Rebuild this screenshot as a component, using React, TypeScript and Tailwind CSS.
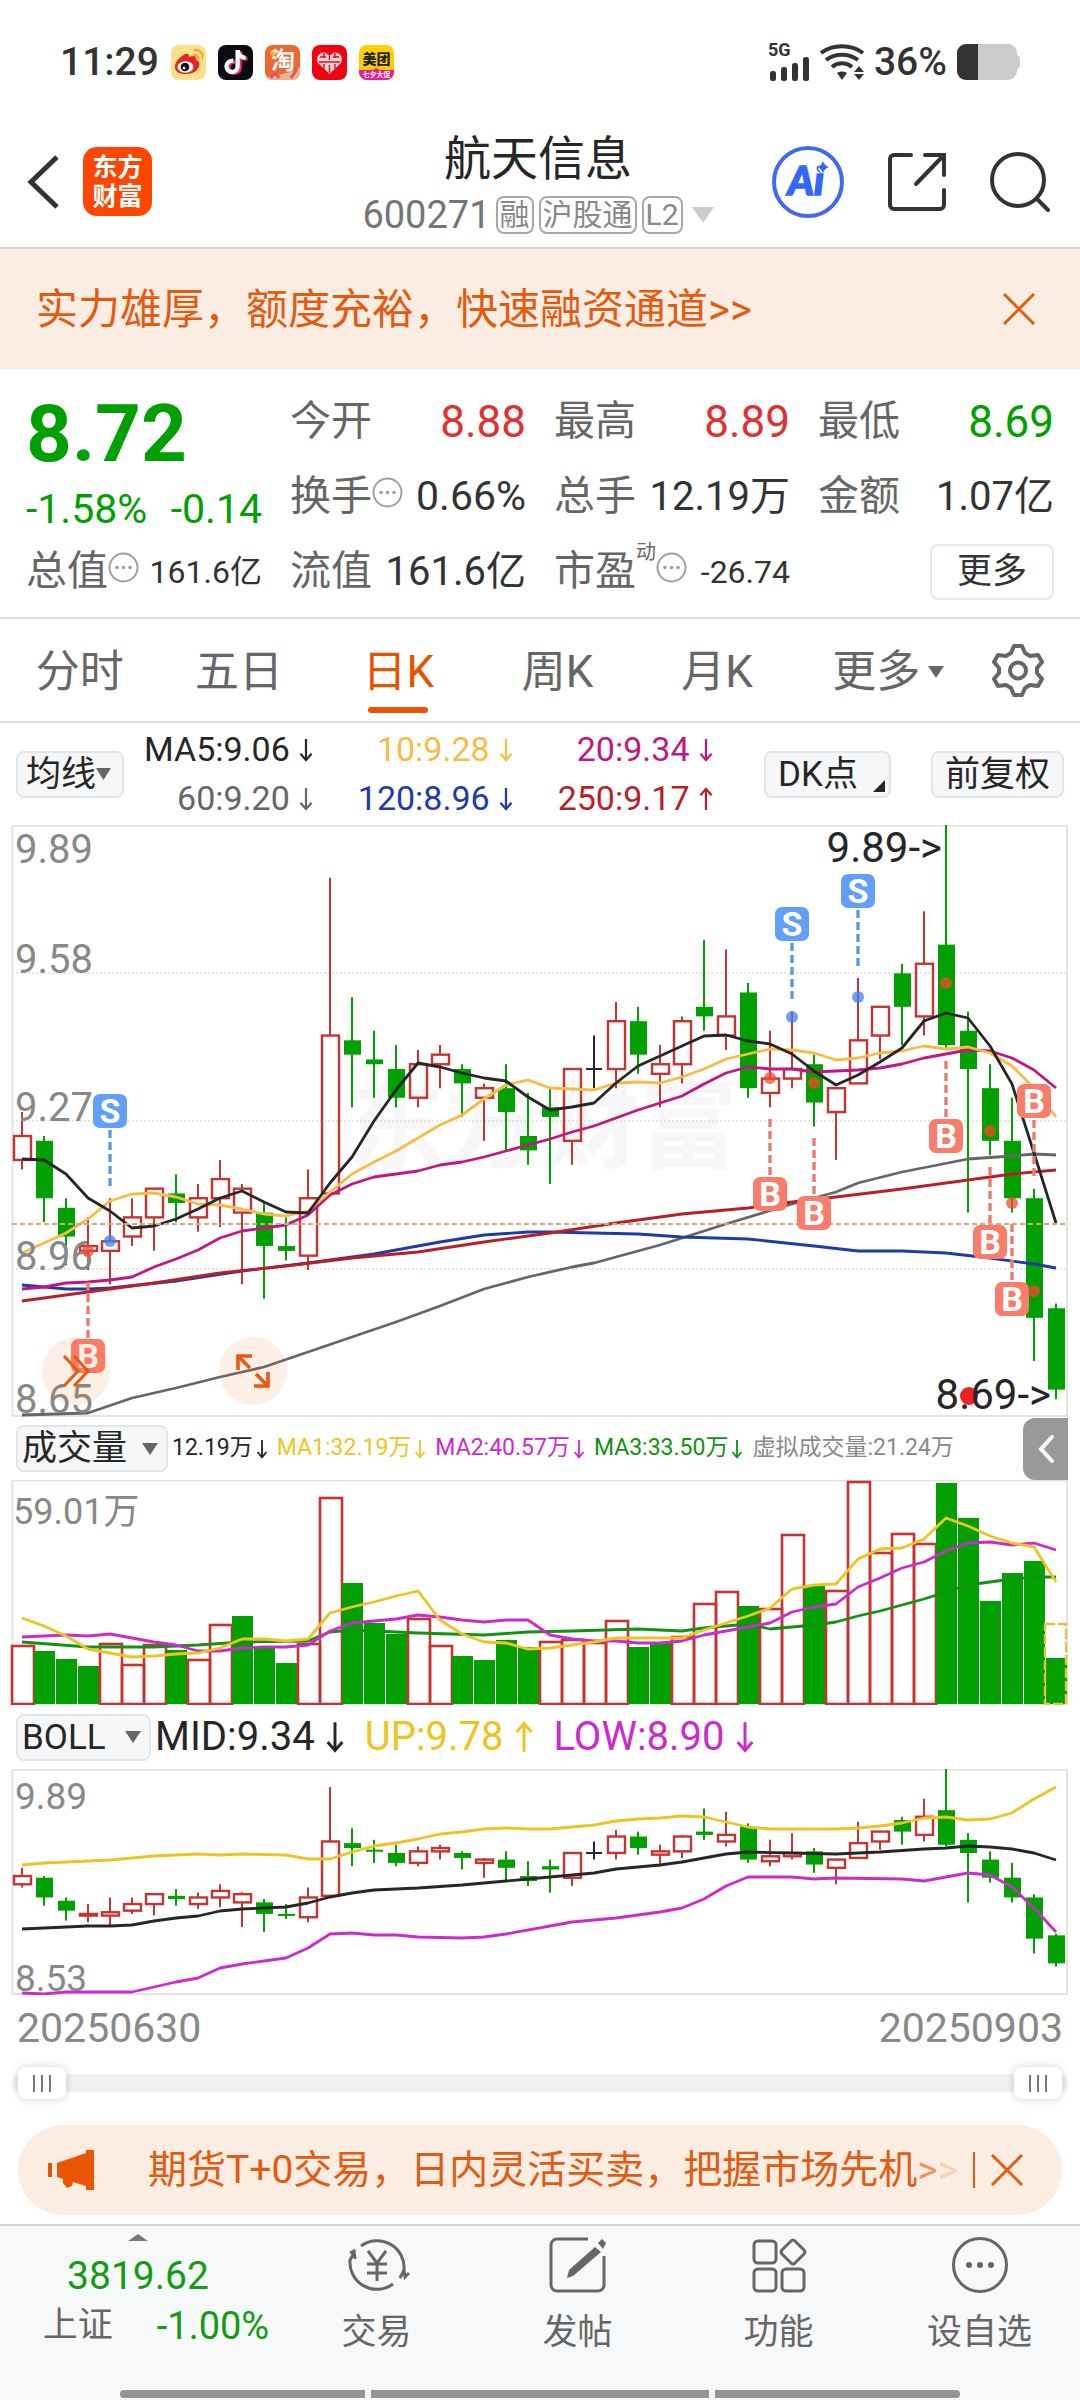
import React, { useState } from 'react';
import { FaTiktok } from 'react-icons/fa6';

type Point = [number, number];

interface Candle {
  open: number;
  close: number;
  high: number;
  low: number;
}

const GREEN = '#00a000';
const RED = '#c63432';

const X0 = 22;
const STEP = 22;
const TOP_PRICE = 9.89;

const xOf = (index: number) => X0 + index * STEP;

const toPoints = (points: Point[]) => points.map(([i, y]) => `${xOf(i)},${y}`).join(' ');

// open, close, high, low
const CANDLES: Candle[] = [
  [9.19, 9.24, 9.29, 9.17],
  [9.23, 9.11, 9.24, 9.06],
  [9.09, 9.03, 9.11, 8.97],
  [9.0, 9.01, 9.07, 8.96],
  [9.0, 9.02, 9.11, 8.93],
  [9.03, 9.07, 9.11, 9.01],
  [9.07, 9.13, 9.13, 9.0],
  [9.12, 9.1, 9.16, 9.06],
  [9.07, 9.11, 9.14, 9.04],
  [9.11, 9.15, 9.19, 9.05],
  [9.08, 9.13, 9.14, 8.93],
  [9.08, 9.01, 9.1, 8.9],
  [9.01, 9.0, 9.07, 8.98],
  [8.99, 9.11, 9.17, 8.96],
  [9.12, 9.45, 9.78, 9.12],
  [9.44, 9.41, 9.53, 9.3],
  [9.4, 9.39, 9.46, 9.32],
  [9.38, 9.32, 9.43, 9.3],
  [9.32, 9.39, 9.42, 9.3],
  [9.39, 9.41, 9.43, 9.34],
  [9.38, 9.35, 9.39, 9.28],
  [9.32, 9.34, 9.35, 9.23],
  [9.34, 9.29, 9.39, 9.21],
  [9.24, 9.21, 9.33, 9.18],
  [9.3, 9.28, 9.34, 9.14],
  [9.23, 9.38, 9.38, 9.18],
  [9.38, 9.38, 9.45, 9.34],
  [9.38, 9.48, 9.52, 9.34],
  [9.48, 9.41, 9.51, 9.37],
  [9.37, 9.39, 9.43, 9.3],
  [9.39, 9.48, 9.49, 9.35],
  [9.51, 9.49, 9.65, 9.46],
  [9.45, 9.49, 9.63, 9.42],
  [9.54, 9.34, 9.56, 9.32],
  [9.33, 9.36, 9.46, 9.3],
  [9.36, 9.38, 9.5, 9.34],
  [9.39, 9.31, 9.41, 9.26],
  [9.29, 9.34, 9.34, 9.19],
  [9.35, 9.44, 9.57, 9.35],
  [9.45, 9.51, 9.51, 9.4],
  [9.58, 9.51, 9.6, 9.43],
  [9.49, 9.6, 9.71, 9.45],
  [9.64, 9.43, 9.89, 9.42],
  [9.46, 9.38, 9.5, 9.08],
  [9.34, 9.23, 9.39, 9.2],
  [9.23, 9.11, 9.32, 9.08],
  [9.11, 8.86, 9.13, 8.77],
  [8.88, 8.71, 8.89, 8.69],
].map(([open, close, high, low]) => ({ open, close, high, low }));

const MA_LINES: { color: string; points: Point[] }[] = [
  {
    color: '#666666',
    points: [[0, 590], [3, 588], [5, 573], [7, 563], [9, 552], [11, 542], [13, 527], [15, 512], [17, 497], [19, 481], [21, 464], [22, 458], [23, 452], [25, 442], [26, 438], [29, 420], [32, 399], [35, 379], [37, 367], [38, 358], [40, 347], [43, 334], [45, 331], [46, 329], [47, 330]],
  },
  {
    color: '#1f3ba8',
    points: [[0, 460], [2, 464], [3, 464], [4, 463], [7, 456], [10, 446], [13, 438], [16, 429], [19, 417], [21, 410], [23, 407], [24, 407], [28, 409], [30, 412], [33, 414], [36, 421], [38, 426], [40, 426], [42, 428], [44, 433], [46, 439], [47, 443]],
  },
  {
    color: '#b81f28',
    points: [[0, 476], [3, 467], [6, 458], [9, 448], [12, 441], [15, 433], [18, 427], [21, 417], [24, 408], [27, 398], [30, 389], [33, 383], [35, 377], [37, 372], [40, 364], [43, 355], [45, 349], [47, 345]],
  },
  {
    color: '#c4167f',
    points: [[0, 464], [1, 462], [2, 458], [3, 457], [4, 455], [5, 452], [6, 442], [7, 434], [8, 425], [9, 413], [10, 406], [11, 403], [12, 400], [13, 390], [14, 370], [15, 359], [16, 352], [17, 349], [18, 346], [19, 340], [20, 337], [21, 332], [22, 326], [23, 320], [24, 314], [25, 307], [26, 301], [27, 293], [28, 285], [29, 278], [30, 271], [31, 259], [32, 248], [33, 242], [34, 244], [35, 244], [36, 247], [37, 246], [38, 245], [39, 243], [40, 239], [41, 233], [42, 229], [43, 225], [44, 226], [45, 233], [46, 245], [47, 263]],
  },
  {
    color: '#f4bd48',
    points: [[0, 428], [1, 418], [2, 408], [3, 394], [4, 376], [5, 369], [6, 368], [7, 372], [8, 379], [9, 380], [10, 384], [11, 389], [12, 391], [13, 386], [14, 367], [15, 349], [16, 337], [17, 326], [18, 313], [19, 300], [20, 290], [21, 274], [22, 260], [23, 255], [24, 263], [25, 264], [26, 265], [27, 258], [28, 257], [29, 258], [30, 252], [31, 244], [32, 234], [33, 229], [34, 224], [35, 225], [36, 228], [37, 235], [38, 233], [39, 228], [40, 226], [41, 221], [42, 224], [43, 222], [44, 228], [45, 241], [46, 263], [47, 292]],
  },
  {
    color: '#262626',
    points: [[0, 334], [1, 335], [2, 349], [3, 373], [4, 386], [5, 403], [6, 401], [7, 394], [8, 384], [9, 373], [10, 366], [11, 377], [12, 387], [13, 388], [14, 358], [15, 332], [16, 296], [17, 265], [18, 238], [19, 242], [20, 248], [21, 253], [22, 256], [23, 272], [24, 285], [25, 282], [26, 278], [27, 258], [28, 241], [29, 231], [30, 221], [31, 211], [32, 210], [33, 216], [34, 219], [35, 229], [36, 246], [37, 260], [38, 250], [39, 237], [40, 223], [41, 196], [42, 188], [43, 193], [44, 221], [45, 259], [46, 328], [47, 398]],
  },
];

// index, badge centre, dashed line start, signal dot
const SIGNALS: { kind: 'S' | 'B'; index: number; badge: number; dash: number; dot?: number }[] = [
  { kind: 'S', index: 4, badge: 286, dash: 305, dot: 416 },
  { kind: 'S', index: 35, badge: 99, dash: 118, dot: 192 },
  { kind: 'S', index: 38, badge: 66, dash: 85, dot: 172 },
  { kind: 'B', index: 3, badge: 531, dash: 457, dot: 426 },
  { kind: 'B', index: 34, badge: 369, dash: 294, dot: 253 },
  { kind: 'B', index: 36, badge: 388, dash: 313, dot: 258 },
  { kind: 'B', index: 42, badge: 311, dash: 236, dot: 158 },
  { kind: 'B', index: 44, badge: 417, dash: 342, dot: 306 },
  { kind: 'B', index: 45, badge: 474, dash: 399, dot: 378 },
  { kind: 'B', index: 46, badge: 276, dash: 295, dot: 466 },
];

const VOLUME_TOPS = [
  165, 171, 179, 186, 163, 184, 164, 170, 179, 144, 136, 168, 183, 163, 17, 103, 143, 154, 138, 165, 176, 180, 160, 167,
  161, 159, 162, 140, 167, 162, 156, 123, 111, 126, 128, 54, 106, 110, 1, 72, 53, 63, 3, 38, 121, 93, 81, 178,
];
const VOLUME_COLORS = 'rgggrrrgrrgggrrgggrrggggrrrrggrrrgrrgrrrrrgggggg';

const VOLUME_LINES: { color: string; points: Point[] }[] = [
  {
    color: '#129212',
    points: [[0, 162], [3, 167], [6, 167], [8, 165], [10, 162], [13, 161], [14, 152], [15, 150], [17, 152], [18, 153], [21, 155], [23, 152], [25, 151], [28, 149], [30, 151], [31, 148], [33, 144], [34, 149], [36, 145], [37, 142], [38, 136], [39, 131], [40, 125], [41, 119], [42, 112], [43, 105], [44, 102], [45, 99], [46, 97], [47, 97]],
  },
  {
    color: '#cb2bcb',
    points: [[0, 157], [2, 155], [3, 156], [4, 154], [5, 158], [6, 162], [7, 165], [8, 171], [9, 171], [10, 168], [11, 167], [12, 167], [13, 165], [14, 151], [15, 143], [17, 139], [18, 135], [19, 137], [20, 140], [21, 142], [22, 140], [23, 140], [24, 155], [25, 159], [26, 161], [27, 161], [28, 163], [29, 163], [30, 161], [31, 155], [32, 151], [33, 147], [34, 143], [35, 132], [36, 127], [37, 124], [38, 107], [39, 98], [40, 88], [41, 82], [42, 71], [43, 63], [44, 62], [45, 65], [46, 63], [47, 70]],
  },
  {
    color: '#eec422',
    points: [[0, 138], [1, 146], [2, 156], [3, 169], [4, 173], [5, 177], [6, 176], [7, 174], [8, 173], [9, 168], [10, 159], [11, 159], [12, 161], [13, 159], [14, 133], [15, 127], [16, 122], [17, 116], [18, 111], [19, 140], [20, 154], [21, 162], [22, 163], [23, 169], [24, 168], [25, 165], [26, 162], [27, 158], [30, 158], [31, 150], [32, 143], [33, 136], [34, 128], [35, 109], [36, 105], [37, 104], [38, 79], [39, 69], [40, 68], [41, 59], [42, 38], [43, 46], [44, 56], [45, 63], [46, 67], [47, 102]],
  },
];

const BOLL_LINES: { color: string; points: Point[] }[] = [
  {
    color: '#eec422',
    points: [[0, 96], [1, 94], [2, 93], [4, 91], [6, 87], [8, 85], [9, 86], [10, 85], [12, 86], [13, 90], [14, 90], [15, 83], [16, 77], [17, 74], [18, 70], [19, 65], [20, 63], [21, 60], [22, 59], [23, 60], [24, 60], [25, 58], [26, 56], [27, 52], [28, 50], [29, 49], [30, 47], [31, 48], [32, 53], [33, 58], [34, 60], [37, 60], [38, 59], [39, 57], [40, 54], [41, 49], [42, 48], [43, 51], [44, 50], [45, 44], [46, 30], [47, 18]],
  },
  {
    color: '#262626',
    points: [[0, 160], [3, 157], [4, 157], [5, 156], [6, 152], [7, 149], [8, 147], [9, 142], [10, 140], [12, 138], [13, 134], [14, 128], [15, 124], [16, 121], [18, 119], [20, 116], [22, 112], [24, 108], [26, 104], [27, 100], [29, 96], [30, 93], [31, 89], [32, 85], [33, 83], [35, 84], [37, 85], [39, 83], [41, 80], [42, 79], [43, 77], [44, 78], [45, 80], [46, 84], [47, 91]],
  },
  {
    color: '#cb2bcb',
    points: [[0, 224], [1, 225], [2, 223], [5, 223], [6, 218], [7, 213], [8, 209], [9, 199], [10, 195], [11, 192], [12, 189], [13, 179], [14, 165], [15, 164], [16, 166], [17, 166], [18, 168], [20, 169], [21, 168], [22, 165], [24, 157], [25, 153], [27, 149], [28, 146], [29, 143], [30, 139], [31, 130], [32, 117], [33, 108], [35, 108], [36, 110], [37, 109], [40, 110], [41, 112], [42, 108], [43, 104], [44, 106], [45, 118], [46, 139], [47, 163]],
  },
];

const TABS = ['分时', '五日', '日K', '周K', '月K'];

const Triangle: React.FC<{ className: string; up?: boolean }> = ({ className, up }) => (
  <svg className={className} viewBox="0 0 10 8" preserveAspectRatio="none" fill="currentColor" aria-hidden="true">
    <path d={up ? 'M0 8 5 0l5 8z' : 'M0 0h10L5 8z'} />
  </svg>
);

const Arrow: React.FC<{ up?: boolean; className?: string }> = ({ up, className = 'h-6 w-4' }) => (
  <svg className={`${className} shrink-0`} viewBox="0 0 16 26" fill="none" stroke="currentColor" strokeWidth={2.4} aria-hidden="true">
    <path d={up ? 'M8 25V2M2 9l6-7 6 7' : 'M8 1v23M2 17l6 7 6-7'} />
  </svg>
);

const CloseIcon: React.FC = () => (
  <svg className="h-8 w-8" viewBox="0 0 32 32" fill="none" stroke="currentColor" strokeWidth={3}>
    <path d="M1 1l30 30M31 1L1 31" />
  </svg>
);

const InfoDots: React.FC = () => (
  <svg className="mb-2 h-[31px] w-[31px] shrink-0 text-[#a0a0a0]" viewBox="0 0 31 31" aria-hidden="true">
    <circle cx="15.5" cy="15.5" r="14" fill="none" stroke="currentColor" strokeWidth={2} />
    <circle cx="9" cy="15.5" r="1.8" fill="currentColor" />
    <circle cx="15.5" cy="15.5" r="1.8" fill="currentColor" />
    <circle cx="22" cy="15.5" r="1.8" fill="currentColor" />
  </svg>
);

const Candles: React.FC<{ scale: number }> = ({ scale }) => {
  const y = (price: number) => (TOP_PRICE - price) * scale;

  return (
    <g>
      {CANDLES.map(({ open, close, high, low }, i) => {
        const x = xOf(i);
        const top = y(Math.max(open, close));
        const bottom = y(Math.min(open, close));

        if (open === close) {
          return <path key={i} d={`M${x} ${y(high)}V${y(low)}M${x - 8} ${top}h16`} stroke="#262626" strokeWidth={2} />;
        }
        if (close > open) {
          return (
            <g key={i} stroke={RED}>
              <path d={`M${x} ${y(high)}V${top}M${x} ${bottom}V${y(low)}`} strokeWidth={2} />
              <rect x={x - 8} y={top} width={17} height={bottom - top} fill="none" strokeWidth={2.4} />
            </g>
          );
        }
        return (
          <g key={i} fill={GREEN}>
            <rect x={x - 1} y={y(high)} width={2} height={y(low) - y(high)} />
            <rect x={x - 8} y={top} width={17} height={Math.max(bottom - top, 2)} />
          </g>
        );
      })}
    </g>
  );
};

const Lines: React.FC<{ lines: { color: string; points: Point[] }[] }> = ({ lines }) => (
  <g fill="none" strokeWidth={2.8} strokeLinejoin="round">
    {lines.map((line, i) => (
      <polyline key={i} points={toPoints(line.points)} stroke={line.color} />
    ))}
  </g>
);

const PriceChart: React.FC = () => (
  <svg className="block w-full" viewBox="0 0 1080 592" fontFamily="Roboto, 'Noto Sans CJK SC', sans-serif" fontSize={40}>
    <text x="346" y="335" fontSize={98} fontWeight={700} fill="#f7f7f7">
      东方财富
    </text>
    <g stroke="#dedede" strokeWidth={1.5} strokeDasharray="2 2">
      <path d="M12 148H1068M12 296H1068M12 444H1068" />
    </g>
    <rect x="12.5" y="0.5" width="1054.5" height="590.5" fill="none" stroke="#e3e3e3" strokeWidth={2} />
    <Candles scale={478.5} />
    <Lines lines={MA_LINES} />
    <path d="M12 399H1068" stroke="#d9a878" strokeWidth={2} strokeDasharray="5 3" />
    <g fill="#888888">
      <text x="15" y="38">9.89</text>
      <text x="15" y="148">9.58</text>
      <text x="15" y="296">9.27</text>
      <text x="15" y="445">8.96</text>
      <text x="15" y="588">8.65</text>
    </g>
    {SIGNALS.map(({ kind, index, badge, dash, dot }) => {
      const x = xOf(index);
      const color = kind === 'S' ? '#619ffb' : '#fa7c6b';
      return (
        <g key={index}>
          <path d={`M${x} ${dash}v57`} stroke={kind === 'S' ? '#5b9be6' : '#e97c6c'} strokeWidth={3.4} strokeDasharray="8 4" />
          <circle cx={x} cy={dot} r="6" fill={kind === 'S' ? '#3f7ff0' : '#f04a2c'} fillOpacity={0.75} />
          <rect x={x - 17} y={badge - 17} width="34" height="34" rx="7" fill={color} />
          <text x={x} y={badge + 12} fontSize={34} fontWeight={700} fill="#ffffff" textAnchor="middle">
            {kind}
          </text>
        </g>
      );
    })}
    <circle cx="969" cy="571" r="9" fill="#ee2222" />
    <g fill="#262626" fontSize={42} textAnchor="end">
      <text x="942" y="37">9.89-&gt;</text>
      <text x="1051" y="584">8.69-&gt;</text>
    </g>
  </svg>
);

const VolumeChart: React.FC = () => (
  <svg className="block w-full" viewBox="0 0 1080 225" fontFamily="Roboto, 'Noto Sans CJK SC', sans-serif" fontSize={36}>
    <rect x="12.5" y="0.5" width="1054.5" height="223.5" fill="none" stroke="#e3e3e3" strokeWidth={2} />
    {VOLUME_TOPS.map((top, i) =>
      VOLUME_COLORS[i] === 'r' ? (
        <rect key={i} x={xOf(i) - 10} y={top + 1} width="22" height={223 - top} fill="none" stroke={RED} strokeWidth={2.6} />
      ) : (
        <rect key={i} x={xOf(i) - 10} y={top} width="21" height={224 - top} fill={GREEN} />
      ),
    )}
    <rect x="1045" y="144" width="21" height="80" fill="none" stroke="#e8c23c" strokeWidth={2.4} strokeDasharray="10 3" />
    <Lines lines={VOLUME_LINES} />
    <text x="13" y="44" fill="#888888">
      59.01万
    </text>
  </svg>
);

const BollChart: React.FC = () => (
  <svg className="block w-full" viewBox="0 0 1080 226" fontFamily="Roboto, 'Noto Sans CJK SC', sans-serif" fontSize={37}>
    <rect x="12.5" y="0.5" width="1054.5" height="224.5" fill="none" stroke="#e3e3e3" strokeWidth={2} />
    <Candles scale={164.7} />
    <Lines lines={BOLL_LINES} />
    <g fill="#888888">
      <text x="15" y="40">9.89</text>
      <text x="15" y="222">8.53</text>
    </g>
  </svg>
);

const StatusBar: React.FC = () => (
  <div className="flex h-[116px] items-center justify-between pt-2 pr-[60px] pl-[60px] text-[#333]">
    <div className="flex items-center gap-3">
      <span className="text-[39px] leading-10 font-medium">11:29</span>
      <svg className="h-[35px] w-[35px] rounded-lg" viewBox="0 0 35 35">
        <rect width="35" height="35" fill="#fde08a" />
        <path d="M4 23c-1-6 6-12 10-14 4-1 4 1 4 3 5-2 8-1 7 3 4 1 4 4 3 7-2 5-8 7-13 7S5 28 4 23z" fill="#e6252b" />
        <ellipse cx="14.5" cy="22" rx="8" ry="5.8" fill="#fff" />
        <circle cx="14" cy="22" r="4.3" fill="#111" />
        <circle cx="13" cy="23" r="1.3" fill="#fff" />
        <path d="M22 10c4-1 6 2 5 5M23 5c6-1 10 4 8 9" fill="none" stroke="#f3a33a" strokeWidth={2} />
      </svg>
      <span className="relative flex h-[35px] w-[35px] items-center justify-center rounded-lg bg-[#0b0b14]">
        <FaTiktok className="absolute top-[5px] left-[5px] h-6 w-6 text-[#25f4ee]" />
        <FaTiktok className="absolute top-[6px] left-[7px] h-6 w-6 text-[#fe2c55]" />
        <FaTiktok className="relative h-6 w-6 text-white" />
      </span>
      <svg className="h-[35px] w-[35px] rounded-lg" viewBox="0 0 35 35">
        <rect width="35" height="35" fill="#ee6630" />
        <circle cx="8" cy="8" r="3" fill="#ffb52e" />
        <path d="M0 35c6-8 22-3 35-13v13z" fill="#efb196" />
        <path d="M6 33c2-5 6-5 8 0M26 33l6-9" stroke="#e54f5e" strokeWidth={3} fill="none" />
        <text x="18" y="24" fontSize={24} fontWeight={700} fill="#fff" textAnchor="middle">
          淘
        </text>
      </svg>
      <svg className="h-[35px] w-[35px] rounded-lg" viewBox="0 0 35 35">
        <rect width="35" height="35" fill="#f20010" />
        <path d="M17.5 29 6 18C3 12 8 6 14 8l3.500 3L21 8c6-2 11 4 8 10z" fill="#ffd9dc" />
        <path d="M8 12h6M21 12h6M7 17h8M20 17h8M12 8v5M23 8v5M12 19v5M23 19v5M17.500 11v4M17.500 20v8M14 17h7" stroke="#f20010" strokeWidth={1.4} />
      </svg>
      <svg className="h-[35px] w-[35px] rounded-lg" viewBox="0 0 35 35">
        <rect width="35" height="35" fill="#ffcf00" />
        <path d="M0 25h14l3-2 4 2h14v10H0z" fill="#ec1c8c" />
        <text x="17.5" y="19" fontSize={14} fontWeight={900} fill="#222" textAnchor="middle">
          美团
        </text>
        <text x="17.5" y="32" fontSize={7} fontWeight={700} fill="#fff" textAnchor="middle">
          七夕大促
        </text>
      </svg>
    </div>
    <div className="flex items-center">
      <div className="flex flex-col">
        <span className="text-[18px] leading-[14px] font-bold">5G</span>
        <svg className="h-[24px] w-[42px]" viewBox="0 0 42 24" fill="currentColor">
          <rect x="2" y="14" width="6" height="10" rx="2.5" />
          <rect x="13" y="10" width="6" height="14" rx="2.5" />
          <rect x="24" y="6" width="6" height="18" rx="2.5" />
          <rect x="35" y="0" width="6" height="24" rx="2.5" />
        </svg>
      </div>
      <svg className="ml-[10px] h-9 w-11" viewBox="0 0 44 36" fill="none" stroke="currentColor" strokeWidth={4}>
        <path d="M1 9c12-9 30-9 42 0" />
        <path d="M6 16c9-7 23-7 32 0" />
        <path d="M12 23c6-5 14-5 20 0" />
        <path d="M17 29c3-2 7-2 10 0l-5 7zM34 28l5-6 5 6zM34 30h10l-5 6z" fill="currentColor" stroke="none" />
      </svg>
      <span className="mr-[10px] ml-[10px] text-[39px] leading-10 font-medium">36%</span>
      <svg className="h-9 w-[63px]" viewBox="0 0 63 36">
        <path d="M9 0h42a9 9 0 0 1 9 9v2q3 1 3 4v6q0 3-3 4v2a9 9 0 0 1-9 9H9a9 9 0 0 1-9-9V9a9 9 0 0 1 9-9z" fill="#cbcbcb" />
        <path d="M21 0H9a9 9 0 0 0-9 9v18a9 9 0 0 0 9 9h12z" fill="#333" />
      </svg>
    </div>
  </div>
);

const Header: React.FC = () => (
  <header className="grid h-[133px] grid-cols-[1fr_auto_1fr] items-center border-b-2 border-[#d6d8de] pr-[30px] pl-[26px]">
    <div className="flex items-center gap-[23px]">
      <button type="button" aria-label="返回">
        <svg className="h-14 w-[34px]" viewBox="0 0 34 56" fill="none" stroke="#333" strokeWidth={5}>
          <path d="M31 3 5 28l26 25" />
        </svg>
      </button>
      <div className="flex h-[69px] w-[69px] flex-col items-center justify-center rounded-[14px] bg-[#fd4600] text-[25px] leading-[29px] font-bold text-white">
        <span>东方</span>
        <span>财富</span>
      </div>
    </div>
    <div className="flex flex-col items-center gap-2">
      <h1 className="text-[47px] leading-[58px] text-[#262626]">航天信息</h1>
      <button type="button" className="flex items-center gap-[5px] text-[30px] leading-[34px] text-[#888]">
        <span className="text-[38px] text-[#757575]">600271</span>
        <span className="rounded-lg border-2 border-[#a8a8a8] px-[2px]">融</span>
        <span className="rounded-lg border-2 border-[#a8a8a8] px-[2px]">沪股通</span>
        <span className="rounded-lg border-2 border-[#a8a8a8] px-[2px]">L2</span>
        <Triangle className="ml-1 h-4 w-[22px] text-[#ccc]" />
      </button>
    </div>
    <div className="flex items-center justify-end gap-[44px]">
      <button type="button" aria-label="Ai">
        <svg className="h-[72px] w-[72px]" viewBox="0 0 72 72">
          <circle cx="36" cy="36" r="34" fill="none" stroke="#4169ee" strokeWidth={4} />
          <text x="34" y="49" fontFamily="Lato, sans-serif" fontSize={40} fontWeight={900} fontStyle="italic" fill="#3366ff" stroke="#3366ff" strokeWidth={1.5} textAnchor="middle">
            Ai
          </text>
          <circle cx="52" cy="21" r="6" fill="#fff" />
          <path d="M51 15q1.500 5 6 6-4.500 1.500-6 6-1.500-4.500-6-6 4.500-1 6-6z" fill="#3366ff" />
        </svg>
      </button>
      <button type="button" aria-label="分享">
        <svg className="h-[58px] w-[58px]" viewBox="0 0 58 58" fill="none" stroke="#333" strokeWidth={4} strokeLinecap="round">
          <path d="M23 2H6a4 4 0 0 0-4 4v46a4 4 0 0 0 4 4h46a4 4 0 0 0 4-4V37M37 2h19v20M55 3 28 31" />
        </svg>
      </button>
      <button type="button" aria-label="搜索">
        <svg className="h-[60px] w-[60px]" viewBox="0 0 60 60" fill="none" stroke="#333" strokeWidth={4} strokeLinecap="round">
          <circle cx="28" cy="28" r="26" />
          <path d="M47 47l11 11" />
        </svg>
      </button>
    </div>
  </header>
);

interface QuoteItemProps {
  label: string;
  value: string;
  info?: boolean;
  sup?: string;
  valueClass?: string;
}

const QuoteItem: React.FC<QuoteItemProps> = ({ label, value, info, sup, valueClass = 'text-[40px] text-[#333]' }) => (
  <div className="flex h-[75px] items-center justify-between whitespace-nowrap">
    <span className="flex items-center text-[41px] text-[#666]">
      {label}
      {sup && <sup className="-top-5 text-xl leading-5">{sup}</sup>}
      {info && <InfoDots />}
    </span>
    <span className={valueClass}>{value}</span>
  </div>
);

const QuotePanel: React.FC = () => (
  <section className="border-b-2 border-[#dcdcdc] px-[26px] pt-[15px] pb-2">
    <div className="grid grid-cols-4 gap-x-7">
      <div className="row-span-2 text-[#00a000]">
        <p className="text-[80px] leading-[100px] font-bold">8.72</p>
        <p className="flex justify-between text-[41px] leading-[50px]">
          <span>-1.58%</span>
          <span>-0.14</span>
        </p>
      </div>
      <QuoteItem label="今开" value="8.88" valueClass="text-[44px] text-[#e03131]" />
      <QuoteItem label="最高" value="8.89" valueClass="text-[44px] text-[#e03131]" />
      <QuoteItem label="最低" value="8.69" valueClass="text-[44px] text-[#00a000]" />
      <QuoteItem label="换手" value="0.66%" info valueClass="text-[41px] text-[#333]" />
      <QuoteItem label="总手" value="12.19万" />
      <QuoteItem label="金额" value="1.07亿" />
      <QuoteItem label="总值" value="161.6亿" info valueClass="text-[32px] text-[#333]" />
      <QuoteItem label="流值" value="161.6亿" />
      <QuoteItem label="市盈" value="-26.74" sup="动" info valueClass="text-[32px] text-[#333]" />
      <div className="flex h-[75px] items-center justify-end">
        <button type="button" className="h-14 w-[124px] rounded-lg border-2 border-[#e8e8e8] text-[35px] leading-[50px] text-[#333]">
          更多
        </button>
      </div>
    </div>
  </section>
);

const PeriodTabs: React.FC = () => {
  const [active, setActive] = useState('日K');

  return (
    <nav className="grid h-[104px] grid-cols-[repeat(6,minmax(0,1fr))_124px] items-center border-b-2 border-[#dcdcdc]">
      {TABS.map((tab) => (
        <button
          key={tab}
          type="button"
          onClick={() => setActive(tab)}
          className={`relative flex h-full items-center justify-center pt-1 text-[44px] ${
            active === tab ? 'text-[#e35300]' : 'text-[#666]'
          }`}
        >
          {tab}
          {active === tab && <span className="absolute bottom-2 h-[6px] w-[60px] rounded-full bg-[#ea5504]" />}
        </button>
      ))}
      <button type="button" className="flex h-full items-center justify-center gap-2 pt-1 pl-6 text-[44px] text-[#666]">
        更多
        <Triangle className="h-3 w-4" />
      </button>
      <button type="button" aria-label="设置" className="flex justify-center">
        <svg className="h-[54px] w-[54px]" viewBox="0 0 54 54" fill="none" stroke="#666" strokeWidth={4} strokeLinejoin="round">
          <path d="M23 3h8l3 7 5 3 8-1 4 7-5 6v5l5 6-4 7-8-1-5 3-3 7h-8l-3-7-5-3-8 1-4-7 5-6v-5l-5-6 4-7 8 1 5-3z" />
          <circle cx="27" cy="27.5" r="8" />
        </svg>
      </button>
    </nav>
  );
};

const SelectBox: React.FC<{ label: string; option: string; className: string; arrow: string }> = ({ label, option, className, arrow }) => (
  <div className={`flex h-[47px] shrink-0 items-center rounded-lg border-2 border-[#e2e5ea] bg-[#f6f7f9] ${className}`}>
    <select aria-label={label} className="field-sizing-content appearance-none bg-transparent text-[35px] leading-[43px] text-[#262626]">
      <option>{option}</option>
    </select>
    <Triangle className={`pointer-events-none shrink-0 text-[#666] ${arrow}`} />
  </div>
);

const LegendItem: React.FC<{ text: string; color: string; up?: boolean }> = ({ text, color, up }) => (
  <span className={`flex items-center justify-end gap-2 ${color}`}>
    {text}
    <Arrow up={up} />
  </span>
);

const AverageBar: React.FC = () => (
  <div className="flex h-[102px] items-center px-4">
    <SelectBox label="主图指标" option="均线" className="w-[108px] pl-2" arrow="h-3 w-[15px]" />
    <div className="ml-5 grid grid-cols-[auto_auto_auto] gap-x-11 text-[34px] leading-[49px]">
      <LegendItem text="MA5:9.06" color="text-[#262626]" />
      <LegendItem text="10:9.28" color="text-[#f4bd48]" />
      <LegendItem text="20:9.34" color="text-[#c4167f]" />
      <LegendItem text="60:9.20" color="text-[#666]" />
      <LegendItem text="120:8.96" color="text-[#1f3ba8]" />
      <LegendItem text="250:9.17" color="text-[#b81f28]" up />
    </div>
    <button type="button" className="ml-auto flex h-[47px] w-[127px] items-center justify-between rounded-lg border-2 border-[#e2e5ea] bg-[#f6f7f9] pl-3 text-[35px] leading-[43px] text-[#262626]">
      DK点
      <svg className="mr-1 mb-1 h-3 w-3 self-end" viewBox="0 0 12 12" fill="#262626">
        <path d="M12 0v12H0z" />
      </svg>
    </button>
    <button type="button" className="ml-10 h-[47px] w-[133px] rounded-lg border-2 border-[#e2e5ea] bg-[#f6f7f9] text-[35px] leading-[43px] text-[#262626]">
      前复权
    </button>
  </div>
);

const VolumeHeader: React.FC = () => (
  <div className="flex h-[63px] items-center pr-3 pl-4">
    <SelectBox label="副图指标" option="成交量" className="w-[152px] justify-between pr-2 pl-1" arrow="h-3 w-4" />
    <div className="ml-1 flex items-center gap-[9px] text-[23px] whitespace-nowrap text-[#262626]">
      <span className="flex items-center gap-[3px]">12.19万<Arrow className="h-6 w-3" /></span>
      <span className="flex items-center gap-[3px] text-[#eec422]">MA1:32.19万<Arrow className="h-6 w-3" /></span>
      <span className="flex items-center gap-[3px] text-[#cb2bcb]">MA2:40.57万<Arrow className="h-6 w-3" /></span>
      <span className="flex items-center gap-[3px] text-[#129212]">MA3:33.50万<Arrow className="h-6 w-3" /></span>
      <span className="text-[#888]">虚拟成交量:21.24万</span>
    </div>
    <button type="button" aria-label="展开" className="ml-auto flex h-[62px] w-[45px] items-center justify-center rounded-l-xl bg-[#999]">
      <svg className="h-7 w-4" viewBox="0 0 16 28" fill="none" stroke="#fff" strokeWidth={4} strokeLinecap="round">
        <path d="M14 2 3 14l11 12" />
      </svg>
    </button>
  </div>
);

const BollHeader: React.FC = () => (
  <div className="flex h-16 items-center px-4">
    <SelectBox label="副图指标二" option="BOLL" className="w-[135px] justify-between pr-2 pl-1" arrow="h-3 w-4" />
    <div className="ml-1 flex items-center gap-5 text-[40px] text-[#262626]">
      <span className="flex items-center gap-[10px]">MID:9.34<Arrow className="h-8 w-5" /></span>
      <span className="flex items-center gap-[10px] text-[#eec422]">UP:9.78<Arrow up className="h-8 w-5" /></span>
      <span className="flex items-center gap-[10px] text-[#cb2bcb]">LOW:8.90<Arrow className="h-8 w-5" /></span>
    </div>
  </div>
);

const THUMB =
  'pointer-events-none absolute inset-x-[6px] top-0 h-10 appearance-none bg-transparent [&::-webkit-slider-thumb]:pointer-events-auto [&::-webkit-slider-thumb]:h-[32px] [&::-webkit-slider-thumb]:w-[48px] [&::-webkit-slider-thumb]:appearance-none [&::-webkit-slider-thumb]:rounded-lg [&::-webkit-slider-thumb]:bg-white [&::-webkit-slider-thumb]:bg-[linear-gradient(90deg,transparent_15px,#777_15px,#777_17px,transparent_17px,transparent_23px,#777_23px,#777_25px,transparent_25px,transparent_31px,#777_31px,#777_33px,transparent_33px)] [&::-webkit-slider-thumb]:bg-[length:100%_17px] [&::-webkit-slider-thumb]:bg-center [&::-webkit-slider-thumb]:bg-no-repeat [&::-webkit-slider-thumb]:shadow-[0_0_8px_rgba(0,0,0,0.18)]';

const RangeSlider: React.FC = () => {
  const [from, setFrom] = useState(0);
  const [to, setTo] = useState(100);

  return (
    <div className="relative mx-3 flex h-10 items-center">
      <div className="h-[18px] w-full rounded-full bg-[#f0f0f2]" />
      <input type="range" aria-label="开始日期" value={from} onChange={(e) => setFrom(Number(e.target.value))} className={THUMB} />
      <input type="range" aria-label="结束日期" value={to} onChange={(e) => setTo(Number(e.target.value))} className={THUMB} />
    </div>
  );
};

const NavItem: React.FC<{ label: string; children: React.ReactNode }> = ({ label, children }) => (
  <a href="#" className="flex w-[201px] flex-col items-center gap-[14px] pt-[10px] text-[35px] leading-[50px] text-[#666]">
    <svg className="h-[58px] w-[66px]" viewBox="0 0 66 58" fill="none" stroke="currentColor" strokeWidth={3}>
      {children}
    </svg>
    {label}
  </a>
);

const BottomNav: React.FC = () => (
  <nav className="border-t-2 border-[#d3d5d9] bg-[#f7f8fa]">
    <div className="flex h-[164px] justify-between">
      <a href="#" className="flex flex-1 flex-col items-center pt-2 text-[#129c12]">
        <Triangle up className="h-[7px] w-5 text-[#777]" />
        <span className="mt-[10px] text-[39px] leading-[50px]">3819.62</span>
        <span className="flex items-center gap-11 pl-9 text-[38px] leading-[50px]">
          <span className="text-[35px] text-[#666]">上证</span>
          -1.00%
        </span>
      </a>
      <NavItem label="交易">
        <path d="M17 10A27 27 0 0 1 60 34l-4 8M60 34l1 7 4-4M49 48A27 27 0 0 1 6 24l4-7M6 17l4-2 1 8" />
        <path d="M24 15l9 12 9-12M23 28h20M23 37h20M33 27v18" />
      </NavItem>
      <NavItem label="发帖">
        <path d="M43 3H12a6 6 0 0 0-6 6v40a6 6 0 0 0 6 6h41a6 6 0 0 0 6-6V20" />
        <path d="M50 11l6 5-28 24-6 2 2-8zM53 7l4-4 4 4-3 6z" fill="currentColor" stroke="none" />
      </NavItem>
      <NavItem label="功能">
        <rect x="8" y="5" width="22" height="22" rx="4" />
        <rect x="8" y="33" width="22" height="22" rx="4" />
        <rect x="36" y="33" width="22" height="22" rx="4" />
        <path d="M45 5q2-2 4 0l9 9q2 2 0 4l-9 9q-2 2-4 0l-9-9q-2-2 0-4z" />
      </NavItem>
      <NavItem label="设自选">
        <circle cx="33" cy="29" r="26.5" />
        <g fill="currentColor" stroke="none">
          <circle cx="22" cy="29" r="3" />
          <circle cx="33" cy="29" r="3" />
          <circle cx="44" cy="29" r="3" />
        </g>
      </NavItem>
    </div>
    <div className="flex h-[10px] gap-[6px] px-[120px]">
      <span className="h-2 flex-[245] rounded-l-full bg-[#949494]" />
      <span className="h-2 flex-[338] bg-[#949494]" />
      <span className="h-2 flex-[245] rounded-r-full bg-[#949494]" />
    </div>
  </nav>
);

const App: React.FC = () => (
  <div className="w-full bg-white font-['Roboto','Noto_Sans_CJK_SC',sans-serif]">
    <StatusBar />
    <Header />

    {/* Financing banner */}
    <div className="flex h-[120px] items-center justify-between bg-[#fcede3] pr-[45px] pl-[36px] text-[42px] text-[#e35a10]">
      <a href="#">实力雄厚，额度充裕，快速融资通道&gt;&gt;</a>
      <button type="button" aria-label="关闭">
        <CloseIcon />
      </button>
    </div>

    <QuotePanel />
    <PeriodTabs />
    <AverageBar />

    {/* Main chart with floating controls */}
    <div className="relative">
      <PriceChart />
      <button type="button" aria-label="快进" className="absolute bottom-[12px] left-[42px] flex h-[68px] w-[68px] items-center justify-center rounded-full bg-[#f97a30]/12">
        <svg className="h-8 w-7" viewBox="0 0 28 32" fill="none" stroke="#e35a10" strokeWidth={3}>
          <path d="M2 1l14 15L2 31M12 1l14 15-14 15" />
        </svg>
      </button>
      <button type="button" aria-label="全屏" className="absolute bottom-[12px] left-[219px] flex h-[68px] w-[68px] items-center justify-center rounded-full bg-[#f97a30]/12">
        <svg className="h-[34px] w-[34px]" viewBox="0 0 34 34" fill="none" stroke="#e35a10" strokeWidth={3.6}>
          <path d="M16 2H2v14M2 2l12 12M18 32h14V18M32 32 20 20" />
        </svg>
      </button>
    </div>

    <VolumeHeader />
    <VolumeChart />
    <BollHeader />
    <BollChart />

    <div className="flex h-[68px] items-center justify-between px-[17px] text-[41px] text-[#888]">
      <time>20250630</time>
      <time>20250903</time>
    </div>
    <RangeSlider />

    {/* Futures promo */}
    <div className="mx-[18px] mt-[22px] mb-[9px] flex h-[90px] items-center rounded-full bg-[#fcede3] pr-[39px] pl-[30px] text-[39px] text-[#e35a10]">
      <svg className="h-10 w-[46px] shrink-0" viewBox="0 0 46 40" fill="#ea5504">
        <path d="M0 13h4v14H0zM9 13l29-10V0h8v40h-8v-4l-13-4-1 4-5 2-4-5v-4l-6-2z" />
      </svg>
      <a href="#" className="ml-[54px] flex-1 overflow-hidden whitespace-nowrap">
        期货T+0交易，日内灵活买卖，把握市场先机<span className="opacity-60">&gt;</span>
        <span className="opacity-20">&gt;</span>
      </a>
      <span className="mr-4 h-9 w-[2px] bg-[#e35a10]" />
      <button type="button" aria-label="关闭">
        <CloseIcon />
      </button>
    </div>

    <BottomNav />
  </div>
);

export default App;
